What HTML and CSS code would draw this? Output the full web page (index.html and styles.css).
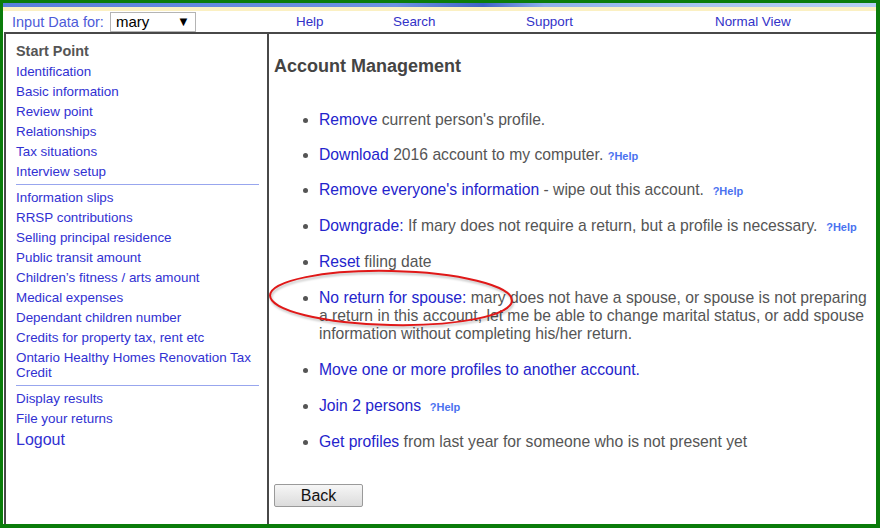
FILE: index.html
```html
<!DOCTYPE html>
<html>
<head>
<meta charset="utf-8">
<link rel="stylesheet" href="styles.css">
</head>
<body>
<div class="frame">
  <div class="band"></div>
  <div class="stripe"></div>
  <header class="topbar">
    <div class="picker">
      <span class="picker-label">Input Data for:</span>
      <div class="select"><span>mary</span><span class="arrow">▼</span></div>
    </div>
    <a class="toplink">Help</a>
    <a class="toplink">Search</a>
    <a class="toplink">Support</a>
    <a class="toplink">Normal View</a>
  </header>
  <div class="workspace">
    <nav class="sidebar">
      <div class="nav-title">Start Point</div>
      <a class="nav-link">Identification</a>
      <a class="nav-link">Basic information</a>
      <a class="nav-link">Review point</a>
      <a class="nav-link">Relationships</a>
      <a class="nav-link">Tax situations</a>
      <a class="nav-link">Interview setup</a>
      <div class="nav-sep"></div>
      <a class="nav-link">Information slips</a>
      <a class="nav-link">RRSP contributions</a>
      <a class="nav-link">Selling principal residence</a>
      <a class="nav-link">Public transit amount</a>
      <a class="nav-link">Children’s fitness / arts amount</a>
      <a class="nav-link">Medical expenses</a>
      <a class="nav-link">Dependant children number</a>
      <a class="nav-link">Credits for property tax, rent etc</a>
      <a class="nav-link">Ontario Healthy Homes Renovation Tax Credit</a>
      <div class="nav-sep"></div>
      <a class="nav-link">Display results</a>
      <a class="nav-link">File your returns</a>
      <a class="nav-link nav-big">Logout</a>
    </nav>
    <main class="content">
      <h2 class="title">Account Management</h2>
      <ul class="actions">
        <li><a class="link">Remove</a> current person's profile.</li>
        <li><a class="link">Download</a> 2016 account to my computer. <a class="help">?Help</a></li>
        <li><a class="link">Remove everyone's information</a> - wipe out this account. &nbsp;<a class="help">?Help</a></li>
        <li><a class="link">Downgrade:</a> If mary does not require a return, but a profile is necessary. &nbsp;<a class="help">?Help</a></li>
        <li><a class="link">Reset</a> filing date</li>
        <li><a class="link">No return for spouse:</a> mary does not have a spouse, or spouse is not preparing a return in this account, let me be able to change marital status, or add spouse information without completing his/her return.</li>
        <li><a class="link">Move one or more profiles to another account.</a></li>
        <li><a class="link">Join 2 persons</a> &nbsp;<a class="help">?Help</a></li>
        <li><a class="link">Get profiles</a> from last year for someone who is not present yet</li>
      </ul>
      <button class="back">Back</button>
      <svg class="annotation" width="248" height="62" viewBox="0 0 248 62">
        <ellipse cx="123" cy="31" rx="121" ry="27" transform="rotate(1.2 123 31)" fill="none" stroke="#e01818" stroke-width="2"/>
      </svg>
    </main>
  </div>
</div>
</body>
</html>
```
FILE: styles.css
```css
html, body {
  margin: 0;
  padding: 0;
}
body {
  width: 880px;
  height: 528px;
  overflow: hidden;
  background: #0a7c0a;
  font-family: "Liberation Sans", Arial, sans-serif;
}
.frame {
  margin: 3px 4px 0 3px;
  width: 873px;
  height: 521px;
  background: #fff;
  display: flex;
  flex-direction: column;
}
.band {
  height: 4px;
  background: linear-gradient(90deg, #5a7fdc 0%, #6e92e2 45%, #3f63c8 55%, #8fb0ea 62%, #a9c4f0 80%, #b6cef2 100%);
}
.stripe {
  height: 4px;
  background: #fbf0c2;
}
.topbar {
  height: 21px;
  display: grid;
  grid-template-columns: 293px 97px 133px 189px 1fr;
  align-items: center;
}
.picker {
  display: flex;
  align-items: center;
  padding-left: 9px;
  gap: 6px;
}
.picker-label {
  font-size: 14.5px;
  color: #4d5bd8;
}
.select {
  box-sizing: border-box;
  width: 86px;
  height: 20px;
  border: 1px solid #b4b4b4;
  display: flex;
  align-items: center;
  justify-content: space-between;
  padding: 0 5px 0 5px;
  font-size: 15px;
  color: #000;
}
.arrow {
  font-size: 13px;
}
.toplink {
  font-size: 13.4px;
  color: #3232c8;
}
.workspace {
  flex: 1;
  margin-left: 1px;
  border-top: 2px solid #484848;
  border-left: 2px solid #484848;
  display: flex;
  min-height: 0;
}
.sidebar {
  width: 243px;
  padding: 10px 8px 0 10px;
  border-right: 2px solid #484848;
  display: flex;
  flex-direction: column;
  gap: 5px;
  font-size: 13.4px;
  line-height: 15px;
}
.nav-title {
  font-weight: bold;
  font-size: 14.4px;
  color: #555;
}
.nav-link {
  color: #3131d2;
}
.nav-big {
  font-size: 16px;
  line-height: 17px;
}
.nav-sep {
  height: 1px;
  background: #98a6ee;
}
.content {
  position: relative;
  flex: 1;
  padding: 0 2px 0 5px;
  color: #555;
}
.title {
  margin: 21px 0 0;
  font-size: 18px;
  line-height: 22px;
  font-weight: bold;
  color: #444;
}
.actions {
  margin: 34px 0 0;
  padding: 0 0 0 45px;
  list-style: disc;
  font-size: 15.7px;
  line-height: 18px;
}
.actions li + li {
  margin-top: 18px;
}
.actions li:nth-child(2),
.actions li:nth-child(3) {
  margin-top: 17px;
}
.link {
  color: #2424cc;
}
.help {
  font-size: 11px;
  line-height: 1;
  font-weight: bold;
  color: #4a72f0;
}
.back {
  margin-top: 33px;
  width: 89px;
  height: 23px;
  font-family: "Liberation Sans", Arial, sans-serif;
  font-size: 16px;
  color: #111;
  border: 1px solid #9a9a9a;
  border-radius: 2px;
  background: linear-gradient(#f6f6f6, #dcdcdc);
  padding: 0;
}
.annotation {
  position: absolute;
  left: -1px;
  top: 233px;
  filter: drop-shadow(1px 2px 1px rgba(0,0,0,0.25));
}
```
